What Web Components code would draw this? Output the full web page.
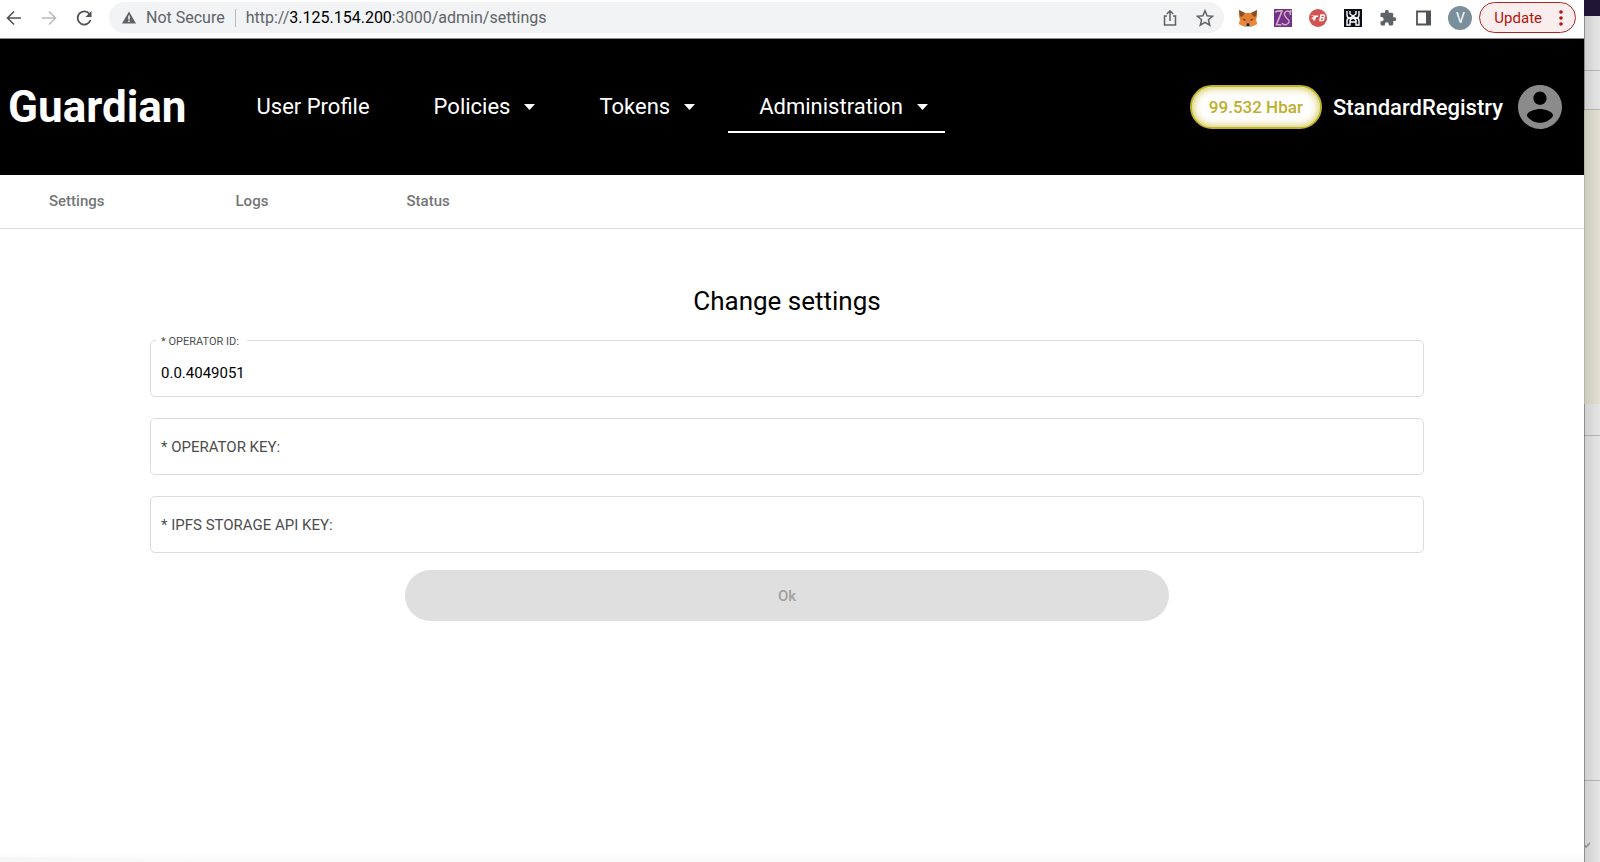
<!DOCTYPE html>
<html lang="en">
<head>
<meta charset="utf-8">
<meta name="viewport" content="width=device-width, initial-scale=1">
<title>Guardian</title>
<style>
  body { margin: 0; font-family: Roboto, sans-serif; color: #000; background: #e4e4e4; }
</style>
</head>
<body>
<desktop-view>
  <browser-bar></browser-bar>
  <guardian-header>
    <nav-item>User Profile</nav-item>
    <nav-item menu>Policies</nav-item>
    <nav-item menu>Tokens</nav-item>
    <nav-item menu active>Administration</nav-item>
  </guardian-header>
  <sub-tabs></sub-tabs>
  <settings-form></settings-form>
  <background-window slot="behind"></background-window>
</desktop-view>

<script>
const define = (name, html, setup) => {
  const template = document.createElement('template');
  template.innerHTML = html;
  customElements.define(name, class extends HTMLElement {
    constructor() {
      super();
      this.attachShadow({ mode: 'open' }).append(template.content.cloneNode(true));
    }
    connectedCallback() { if (setup) setup(this, this.shadowRoot); }
  });
};

define('desktop-view', `
<style>
  :host { display: grid; grid-template-columns: minmax(0, 1fr) 16px; min-height: 100vh; }
  .window { display: flex; flex-direction: column; background: #fff; min-width: 0; }
  ::slotted(settings-form) { flex: 1; }
</style>
<div class="window"><slot></slot></div>
<slot name="behind"></slot>`);

define('browser-bar', `
<style>
  :host { display: flex; align-items: center; height: 38px; border-bottom: 1px solid #8c8f8e; background: #fff; color: #5f6368; }
  * { box-sizing: border-box; }
  button { display: flex; align-items: center; justify-content: center; border: 0; padding: 0; background: none; color: inherit; font: inherit; flex: none; }
  svg { display: block; flex: none; }
  .controls { display: flex; align-items: center; gap: 15px; padding: 0 15px 3px 4px; }
  .address { flex: 1; min-width: 0; display: flex; align-items: center; height: 31px; margin-bottom: 3px; padding: 0 9px 0 13px; border-radius: 16px; background: #f1f3f4; font-size: 16px; line-height: 20px; white-space: nowrap; }
  .warn { margin-right: 10px; }
  .divider { width: 1px; height: 18px; margin: 0 10px; background: #b9bcbf; }
  .url { flex: 1; overflow: hidden; }
  b { font-weight: 400; color: #000; }
  .actions { display: flex; gap: 15px; }
  .tools { display: flex; align-items: center; gap: 15px; padding: 0 8px 3px 14px; }
  .tools button { min-width: 20px; }
  .face { width: 24px; height: 24px; border-radius: 50%; background: #7a8f9b; color: #fff; font-size: 14px; }
  .tools .face { margin-right: -8px; }
  .update { height: 31px; padding: 0 12px 0 14px; gap: 17px; border: 1px solid #b3261e; border-radius: 16px; background: #f9eeed; color: #b3140f; font-size: 15px; }
</style>
<div class="controls">
  <button aria-label="Back"><svg width="20" height="20" viewBox="0 0 20 20" fill="none" stroke="#4f5357" stroke-width="1.600"><path d="M17 10H4M10 3.500 3.500 10 10 16.500"/></svg></button>
  <button aria-label="Forward"><svg width="20" height="20" viewBox="0 0 20 20" fill="none" stroke="#b9bbbd" stroke-width="1.600"><path d="M3 10h13M10 3.500 16.500 10 10 16.500"/></svg></button>
  <button aria-label="Reload"><svg width="20" height="20" viewBox="0 0 20 20" fill="none" stroke="#4f5357" stroke-width="1.800"><path d="M15.500 6A6.600 6.600 0 1 0 16.500 12"/><path d="M17.500 3V9h-6z" fill="#4f5357" stroke="none"/></svg></button>
</div>
<div class="address">
  <svg class="warn" width="14" height="13" viewBox="0 0 14 13"><path d="M7 .5 14 12.500H0z" fill="#5f6368"/><path d="M6.200 4.500h1.600v4H6.200zM6.200 9.500h1.600V11H6.200z" fill="#f1f3f4"/></svg>
  <span>Not Secure</span><span class="divider"></span>
  <span class="url" role="textbox" aria-label="Address">http://<b>3.125.154.200</b>:3000/admin/settings</span>
  <div class="actions">
    <button aria-label="Share"><svg width="20" height="20" viewBox="0 0 20 20" fill="none" stroke="#5f6368" stroke-width="1.500"><path d="M7 8H4.500v9h11V8H13M10 13V3M6.800 6 10 2.800 13.200 6"/></svg></button>
    <button aria-label="Bookmark"><svg width="20" height="20" viewBox="0 0 20 20" fill="none" stroke="#5f6368" stroke-width="1.500"><path d="m10 2.800 2.100 5 5.400.5-4.100 3.500 1.300 5.300L10 14.300l-4.700 2.800 1.300-5.300L2.500 8.300l5.400-.5z"/></svg></button>
  </div>
</div>
<div class="tools">
  <button aria-label="Wallet"><svg width="20" height="20" viewBox="0 0 20 20"><path d="M1 2 7 5h6l6-3v6l-1 4 1 4-4 2-3 1H8l-3-1-4-2 1-4-1-4z" fill="#e2802f"/><path d="M1 2l6 3-3 4-2-1zM19 2l-6 3 3 4 2-1z" fill="#8a4b25"/><path d="M2 12h5l1 5-3 1-4-2zM18 12h-5l-1 5 3 1 4-2z" fill="#f0883a"/><path d="M5 10.500l3 1.500-2 1zM15 10.500l-3 1.500 2 1z" fill="#30343f"/><path d="M8 16h4l1 2-1 1H8l-1-1z" fill="#c0ad9e"/><path d="M8.500 15.500h3V18h-3z" fill="#222"/></svg></button>
  <button aria-label="Extension"><svg width="18" height="18" viewBox="0 0 18 18"><path d="M0 0h18v18H0z" fill="#74318c"/><path d="M1 3q4-1.500 7-1L2.500 15.500l5 .5" fill="none" stroke="#d2b0bd" stroke-width="1.600"/><path d="M16.500 4C14 0 9 3 11 7s5 3 4 6-5 4-7 1M17 1l-1 5" fill="none" stroke="#d2b0bd" stroke-width="1.400"/></svg></button>
  <button aria-label="Extension"><svg width="20" height="20" viewBox="0 0 20 20"><circle cx="10" cy="10" r="9" fill="#d35252"/><path d="M2.500 7.500h8l-.5 1.500H8L7 12.500H5l.5-1.500h-2L4 9.500h1.500l.5-1z" fill="#fff"/><path d="M13 7h2.200q1.800 0 1.300 1.500-.4 1.100-1.500 1.200 1.200.1.800 1.500-.4 1.400-1.800 1.400h-2.200zM12.600 9.800h2.400" fill="none" stroke="#fff" stroke-width="1.400"/></svg></button>
  <button aria-label="Extension"><svg width="18" height="18" viewBox="0 0 18 18"><path d="M0 0h18v18H0z" fill="#0b0d18"/><path d="M3 2v4q0 3 3 3h6q3 0 3-3V2M6 2v3l6 4M12 2v3L6 9M3 12v4h3v-4q0-2 3-3 3 1 3 3v4h3v-4q0-3-3-3H6q-3 0-3 3M6 13h6" fill="none" stroke="#fff" stroke-width="1.400"/></svg></button>
  <button aria-label="Extensions"><svg width="18" height="18" viewBox="0 0 24 24"><path fill="#5f6368" d="M20.500 11H19V7c0-1.100-.9-2-2-2h-4V3.500a2.500 2.500 0 0 0-5 0V5H4c-1.100 0-2 .9-2 2v3.800h1.500a2.700 2.700 0 0 1 0 5.400H2V20c0 1.100.9 2 2 2h3.800v-1.500a2.700 2.700 0 0 1 5.400 0V22H17c1.100 0 2-.9 2-2v-4h1.500a2.500 2.500 0 0 0 0-5z"/></svg></button>
  <button aria-label="Side panel"><svg width="20" height="18" viewBox="0 0 20 18"><path d="M4 2.500h13v13H4z" fill="none" stroke="#4f5357" stroke-width="1.800"/><path d="M13 2h5v14h-5z" fill="#4f5357"/></svg></button>
  <button class="face" aria-label="Profile">V</button>
  <button class="update">Update<svg width="4" height="16" viewBox="0 0 4 16" fill="#b3140f"><circle cx="2" cy="2" r="1.800"/><circle cx="2" cy="8" r="1.800"/><circle cx="2" cy="14" r="1.800"/></svg></button>
</div>`);

define('guardian-header', `
<style>
  :host { display: flex; align-items: center; height: 136px; padding: 0 22px 0 8px; box-sizing: border-box; background: #000; color: #fff; }
  .brand { color: inherit; text-decoration: none; font-size: 44px; font-weight: 700; line-height: 48px; margin-right: 39px; }
  nav { display: flex; gap: 2px; flex: 1; }
  .balance { flex: none; display: flex; align-items: center; height: 44px; box-sizing: border-box; padding: 0 17px; border: 2px solid #c0b128; border-radius: 22px; background: #fff; box-shadow: inset 0 0 10px #c8bb35; color: #bfae2b; font-size: 17px; font-weight: 500; }
  .user { margin: 0 15px 0 11px; font-size: 22px; font-weight: 500; }
  button { border: 0; padding: 0; background: none; display: block; }
  svg { display: block; }
</style>
<a class="brand" href="#">Guardian</a>
<nav><slot></slot></nav>
<span class="balance">99.532 Hbar</span>
<span class="user">StandardRegistry</span>
<button aria-label="Account"><svg width="44" height="44" viewBox="2 2 20 20"><path fill="#8b8b8b" d="M12 2C6.480 2 2 6.480 2 12s4.480 10 10 10 10-4.480 10-10S17.520 2 12 2zm0 3c1.660 0 3 1.340 3 3s-1.340 3-3 3-3-1.340-3-3 1.340-3 3-3zm0 14.200c-2.500 0-4.710-1.280-6-3.220.03-1.990 4-3.080 6-3.080 1.990 0 5.970 1.090 6 3.080-1.290 1.940-3.500 3.220-6 3.220z"/></svg></button>`);

define('nav-item', `
<style>
  :host { display: block; }
  a, button { display: flex; align-items: center; height: 52px; box-sizing: border-box; padding: 0 31px; border: solid transparent; border-width: 2px 0; background: none; color: #fff; font: 400 22px/28px Roboto, sans-serif; text-decoration: none; white-space: nowrap; }
  svg { margin-left: 14px; }
  :host([active]) button { padding-right: 17px; border-bottom-color: #fff; }
</style>`, (host, root) => {
  const item = document.createElement(host.hasAttribute('menu') ? 'button' : 'a');
  if (item.localName === 'a') item.href = '#profile';
  else item.setAttribute('aria-haspopup', 'menu');
  item.innerHTML = '<slot></slot>' + (host.hasAttribute('menu')
    ? '<svg width="11" height="6" viewBox="0 0 11 6"><path d="M0 0h11L5.500 6z" fill="#fff"/></svg>' : '');
  root.append(item);
});

define('sub-tabs', `
<style>
  :host { display: block; border-bottom: 1px solid #dcdcdc; }
  nav { display: flex; height: 53px; box-sizing: border-box; padding: 0 0 2px 49px; align-items: center; gap: 131px; }
  a { min-width: 40px; color: #757575; text-decoration: none; font-size: 15px; font-weight: 500; }
</style>
<nav><a href="#settings">Settings</a><a href="#logs">Logs</a><a href="#status">Status</a></nav>`);

define('settings-form', `
<style>
  :host { display: block; padding: 54px 160px 24px 150px; background: linear-gradient(90deg, #f6f6f6, #f6f6f600) 0 100% / 200px 5px no-repeat, linear-gradient(#fff0, #fafafa) 0 100% / 100% 12px no-repeat, #fff; }
  form { display: flex; flex-direction: column; }
  h1 { margin: 0 0 21px; text-align: center; font-size: 26px; line-height: 36px; font-weight: 400; }
  .fields { display: grid; gap: 21px; }
  button { align-self: center; width: 60%; height: 51px; margin-top: 17px; border: 0; border-radius: 26px; background: #dfdfdf; color: #a0a0a0; font: 500 15px Roboto, sans-serif; }
</style>
<form>
  <h1>Change settings</h1>
  <div class="fields">
    <outlined-field label="* OPERATOR ID:" value="0.0.4049051"></outlined-field>
    <outlined-field label="* OPERATOR KEY:"></outlined-field>
    <outlined-field label="* IPFS STORAGE API KEY:"></outlined-field>
  </div>
  <button type="submit" disabled>Ok</button>
</form>`);

define('outlined-field', `
<style>
  :host { display: grid; height: 57px; box-sizing: border-box; border: 1px solid #dcdcdc; border-radius: 5px; }
  label, input { grid-area: 1 / 1; }
  label { justify-self: start; align-self: center; margin-left: 5px; padding: 0 5px; z-index: 1; font-size: 15px; line-height: 20px; color: #4d4d4d; pointer-events: none; }
  :host([value]) label { align-self: start; margin-top: -8px; padding-right: 8px; background: #fff; font-size: 11px; line-height: 18px; }
  input { min-width: 0; width: 100%; box-sizing: border-box; border: 0; outline: 0; background: none; padding: 8px 10px 0; font: 400 15px Roboto, sans-serif; color: #000; }
</style>
<label for="field"></label><input id="field" type="text">`, (host, root) => {
  root.querySelector('label').textContent = host.getAttribute('label');
  root.querySelector('input').value = host.getAttribute('value') || '';
});

define('background-window', `
<style>
  :host { display: flex; flex-direction: column; background: #e6e6e6; box-shadow: inset 1px 0 #b4b4b4; }
  div { box-sizing: border-box; border-bottom: 1px solid #0003; background: linear-gradient(90deg, #0003 1px, #00000018 1px, #0000); }
  .photo { height: 16px; background: #211536; border: 0; }
  .tabs { height: 55px; }
  .bar { height: 39px; }
  .banner { height: 294px; border: 0; background: linear-gradient(90deg, #b7b5a9 1px, #cdcbbd 1px, #e4e1d2); }
  .row { height: 32px; }
  .body { height: 345px; }
  .foot { flex: 1; border: 0; display: flex; align-items: flex-end; padding-bottom: 14px; }
</style>
<div class="photo"></div><div class="tabs"></div><div class="bar"></div><div class="banner"></div>
<div class="row"></div><div class="body"></div>
<div class="foot"><svg width="6" height="6" viewBox="0 0 6 6" fill="none" stroke="#888" stroke-width="1.500"><path d="M0 3l2 2 4-4"/></svg></div>`);
</script>
</body>
</html>
